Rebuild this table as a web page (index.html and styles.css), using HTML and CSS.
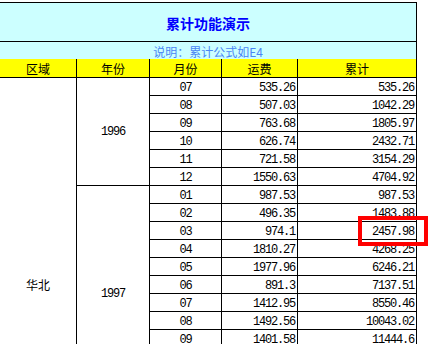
FILE: index.html
```html
<!DOCTYPE html>
<html lang="zh">
<head>
<meta charset="utf-8">
<title>累计功能演示</title>
<link rel="stylesheet" href="styles.css">
</head>
<body>
<div class="sheet">
<table class="report">
  <colgroup>
    <col class="c-region"><col class="c-year"><col class="c-month"><col class="c-fee"><col class="c-sum">
  </colgroup>
  <tr class="r-title"><td colspan="5" class="title">累计功能演示</td></tr>
  <tr class="r-note"><td colspan="5" class="note">说明：累计公式如E4</td></tr>
  <tr class="r-head">
    <th>区域</th><th>年份</th><th>月份</th><th>运费</th><th>累计</th>
  </tr>
  <tr><td rowspan="23" class="region">华北</td><td rowspan="6" class="year">1996</td><td class="month">07</td><td class="num">535.26</td><td class="num">535.26</td></tr>
  <tr><td class="month">08</td><td class="num">507.03</td><td class="num">1042.29</td></tr>
  <tr><td class="month">09</td><td class="num">763.68</td><td class="num">1805.97</td></tr>
  <tr><td class="month">10</td><td class="num">626.74</td><td class="num">2432.71</td></tr>
  <tr><td class="month">11</td><td class="num">721.58</td><td class="num">3154.29</td></tr>
  <tr><td class="month">12</td><td class="num">1550.63</td><td class="num">4704.92</td></tr>
  <tr><td rowspan="12" class="year">1997</td><td class="month">01</td><td class="num">987.53</td><td class="num">987.53</td></tr>
  <tr><td class="month">02</td><td class="num">496.35</td><td class="num">1483.88</td></tr>
  <tr><td class="month">03</td><td class="num">974.1</td><td class="num">2457.98</td></tr>
  <tr><td class="month">04</td><td class="num">1810.27</td><td class="num">4268.25</td></tr>
  <tr><td class="month">05</td><td class="num">1977.96</td><td class="num">6246.21</td></tr>
  <tr><td class="month">06</td><td class="num">891.3</td><td class="num">7137.51</td></tr>
  <tr><td class="month">07</td><td class="num">1412.95</td><td class="num">8550.46</td></tr>
  <tr><td class="month">08</td><td class="num">1492.56</td><td class="num">10043.02</td></tr>
  <tr><td class="month">09</td><td class="num">1401.58</td><td class="num">11444.6</td></tr>
  <tr><td class="month">10</td><td class="num">1218.44</td><td class="num">12663.04</td></tr>
  <tr><td class="month">11</td><td class="num">1060.35</td><td class="num">13723.39</td></tr>
  <tr><td class="month">12</td><td class="num">1453.27</td><td class="num">15176.66</td></tr>
  <tr><td rowspan="5" class="year">1998</td><td class="month">01</td><td class="num">1102.4</td><td class="num">1102.4</td></tr>
  <tr><td class="month">02</td><td class="num">865.12</td><td class="num">1967.52</td></tr>
  <tr><td class="month">03</td><td class="num">1236.8</td><td class="num">3204.32</td></tr>
  <tr><td class="month">04</td><td class="num">948.65</td><td class="num">4152.97</td></tr>
  <tr><td class="month">05</td><td class="num">1307.19</td><td class="num">5460.16</td></tr>
</table>
<div class="mark"></div>
</div>
</body>
</html>
```

FILE: styles.css
```css
html, body {
  margin: 0;
  padding: 0;
  background: #ffffff;
}
body {
  width: 442px;
  height: 344px;
  overflow: hidden;
  font-family: "Noto Sans CJK SC", "Liberation Sans", sans-serif;
  font-size: 12px;
  color: #000000;
}
.sheet {
  position: relative;
  width: 442px;
  height: 344px;
  overflow: hidden;
}
.report {
  margin-top: 2px;
  border-collapse: separate;
  border-spacing: 0;
  table-layout: fixed;
  width: 417px;
}
.c-region { width: 77px; }
.c-year { width: 73px; }
.c-month { width: 72px; }
.c-fee { width: 76px; }
.c-sum { width: 119px; }

.report td, .report th {
  padding: 0;
  box-sizing: border-box;
  line-height: 14px;
  vertical-align: middle;
  white-space: nowrap;
  overflow: hidden;
}
.report tr { height: 18px; }

.report tr.r-title { height: 40px; }
.report .title {
  background: #ccffff;
  border-top: 1px solid #000;
  border-right: 1px solid #000;
  border-bottom: 1px solid #000;
  text-align: center;
  color: #0000ff;
  font-weight: bold;
  font-size: 14px;
  line-height: 16px;
  padding-top: 1px;
}
.report tr.r-note { height: 17px; }
.report .note {
  background: #ccffff;
  border-right: 1px solid #000;
  text-align: center;
  color: #4a86f5;
  font-size: 12px;
  line-height: 14px;
  padding-top: 2px;
}
.report tr.r-head { height: 19px; }
.report .r-head th {
  background: #ffff00;
  border-right: 1px solid #000;
  border-bottom: 1px solid #000;
  font-weight: normal;
  font-size: 12px;
  text-align: center;
  padding-top: 2px;
}
.report .region {
  border-right: 1px solid #000;
  text-align: center;
  font-size: 12px;
}
.report .year {
  border-right: 1px solid #000;
  border-bottom: 1px solid #000;
  text-align: center;
  font-family: "Liberation Mono", "DejaVu Sans Mono", monospace;
  letter-spacing: -1.2px;
}
.report .month {
  border-right: 1px solid #000;
  border-bottom: 1px solid #000;
  text-align: center;
  font-family: "Liberation Mono", "DejaVu Sans Mono", monospace;
  letter-spacing: -1.2px;
  padding-top: 2px;
}
.report .num {
  border-right: 1px solid #000;
  border-bottom: 1px solid #000;
  text-align: right;
  font-family: "Liberation Mono", "DejaVu Sans Mono", monospace;
  letter-spacing: -1.2px;
  padding-top: 2px;
  padding-right: 2px;
}
.mark {
  position: absolute;
  left: 358px;
  top: 216px;
  width: 70px;
  height: 30px;
  box-sizing: border-box;
  border: 4px solid #ff0000;
}
```
